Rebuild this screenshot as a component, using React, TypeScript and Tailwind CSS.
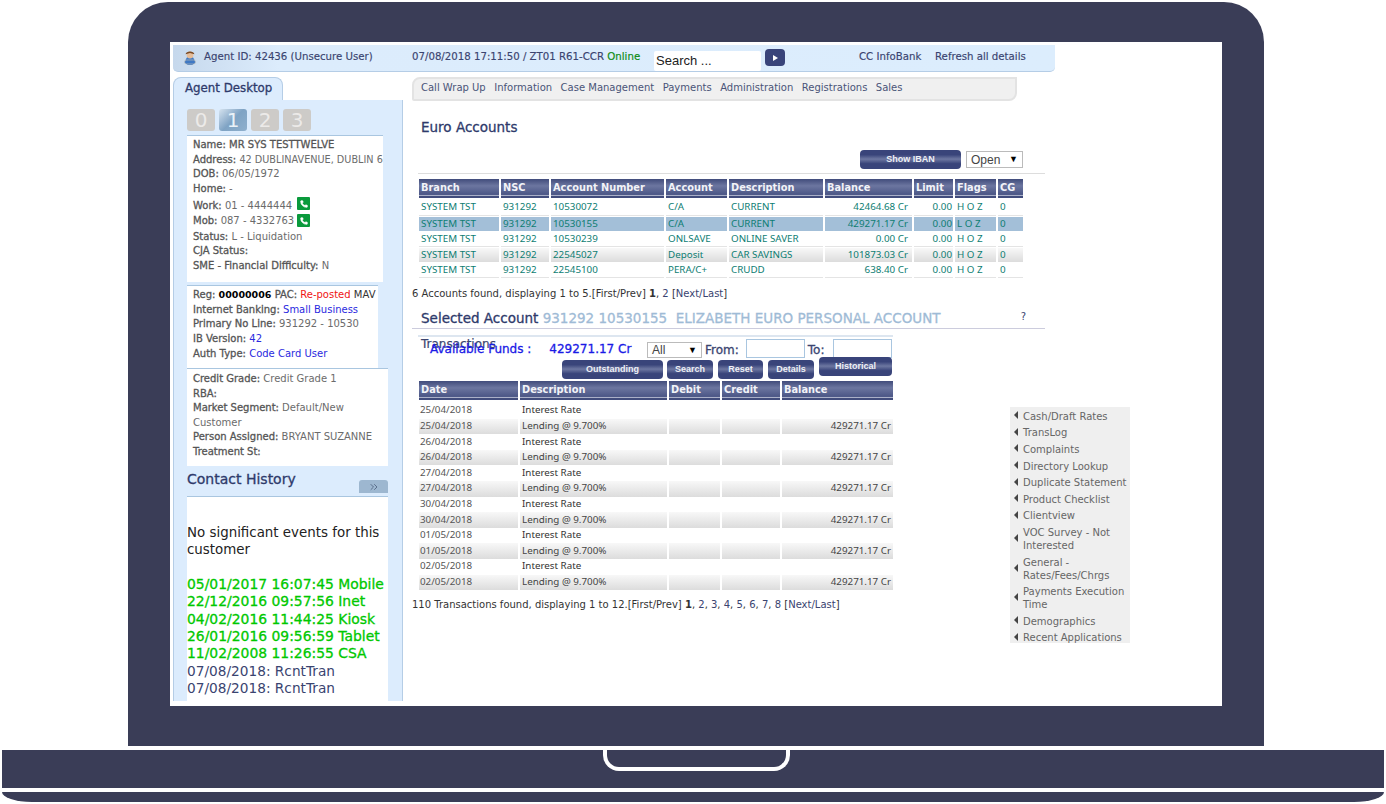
import { ChevronsRight, Phone } from "lucide-react";

const accounts = [
  ["SYSTEM TST", "931292", "10530072", "C/A", "CURRENT", "42464.68 Cr", "0.00", "H O Z", "0"],
  ["SYSTEM TST", "931292", "10530155", "C/A", "CURRENT", "429271.17 Cr", "0.00", "L O Z", "0"],
  ["SYSTEM TST", "931292", "10530239", "ONLSAVE", "ONLINE SAVER", "0.00 Cr", "0.00", "H O Z", "0"],
  ["SYSTEM TST", "931292", "22545027", "Deposit", "CAR SAVINGS", "101873.03 Cr", "0.00", "H O Z", "0"],
  ["SYSTEM TST", "931292", "22545100", "PERA/C+", "CRUDD", "638.40 Cr", "0.00", "H O Z", "0"],
];

const dates = ["25/04/2018", "26/04/2018", "27/04/2018", "30/04/2018", "01/05/2018", "02/05/2018"];

const sideLinks = [
  "Cash/Draft Rates",
  "TransLog",
  "Complaints",
  "Directory Lookup",
  "Duplicate Statement",
  "Product Checklist",
  "Clientview",
  "VOC Survey - Not Interested",
  "General - Rates/Fees/Chrgs",
  "Payments Execution Time",
  "Demographics",
  "Recent Applications",
];

const headCell =
  "h-[19px] flex items-center pl-[2px] pt-[2px] text-[9.8px] font-bold text-[#f2f3f8] border-b-2 border-b-[#414c7c] bg-[linear-gradient(#414c7b,#6c76a0_40%,#4f5a89_85%)] shadow-[inset_0_-1px_0_#aab0c8]";

const fadeCell = "bg-[linear-gradient(#f8f8f8,#dcdcdc)]";

const NavyButton = ({ label, className }: { label: string; className: string }) => (
  <button className={`rounded-[4px] text-[9px] font-bold text-[#eef0f6] font-['Liberation_Sans',sans-serif] bg-[linear-gradient(#39447a,#39447a_25%,#6d77a1_48%,#39447a_72%)] ${className}`}>
    {label}
  </button>
);

const FakeSelect = ({ label, className }: { label: string; className: string }) => (
  <div className={`flex items-center justify-between border border-[#bbb] bg-white px-[4px] font-['Liberation_Sans',sans-serif] text-[12px] font-normal text-[#444] [-webkit-text-stroke:0] ${className}`}>
    <span>{label}</span>
    <span className="text-[9px] text-black">▼</span>
  </div>
);

const PhoneBadge = () => (
  <span className="mt-[1px] inline-flex h-[13px] w-[13px] items-center justify-center self-start rounded-[1px] bg-[#0a9a3c]">
    <Phone size={8} fill="white" stroke="white" />
  </span>
);

const Label = ({ children }: { children: React.ReactNode }) => (
  <span className="text-[#555] [-webkit-text-stroke:0.3px]">{children}</span>
);

export default function App() {
  return (
    <div className="flex h-[804px] w-[1386px] flex-col overflow-hidden bg-white font-['DejaVu_Sans',sans-serif] text-[10px] text-[#6b6b6b]">
      {/* lid */}
      <div className="ml-[128px] mt-[2px] h-[744px] w-[1136px] rounded-t-[40px] bg-[#3a3d57] pl-[42px] pt-[40px]">
        <div className="h-[664px] w-[1052px] overflow-hidden bg-white">
          {/* top bar */}
          <div className="ml-[3px] mt-[3px] flex h-[27px] w-[882px] items-start rounded-b-[5px] border-b border-[#b5cde6] bg-[linear-gradient(90deg,#c6d8ec,#dcecfc_12%,#dcedfd)] text-[10.2px] text-[#3a4470] [-webkit-text-stroke:0.15px]">
            <svg width="16" height="16" viewBox="0 0 16 16" className="ml-[9px] mt-[4px]">
              <circle cx="8" cy="12" r="4.5" fill="#3f78c4" />
              <rect x="2.5" y="11" width="11" height="4" rx="2" fill="#3f78c4" stroke="#c9c2b4" strokeWidth="0.6" />
              <circle cx="8" cy="6" r="3.4" fill="#e6bd9a" />
              <path d="M3.6 5.2C4 1.6 12 1.6 12.4 5.2L8 4z" fill="#7a4a25" />
            </svg>
            <span className="ml-[6px] mt-[4px] w-[208px]">Agent ID: 42436 (Unsecure User)</span>
            <span className="mt-[4px] w-[242px]">
              07/08/2018 17:11:50 / ZT01 R61-CCR <span className="text-[#0b8a12]">Online</span>
            </span>
            <div className="mt-[6px] flex h-[20px] w-[107px] items-center rounded-[2px] bg-white pl-[2px] font-['Liberation_Sans',sans-serif] text-[13px] text-[#222] [-webkit-text-stroke:0]">
              Search ...
            </div>
            <div className="ml-[4px] mt-[4px] flex h-[17px] w-[20px] items-center justify-center rounded-[4px] bg-[#39447a]">
              <span className="h-0 w-0 border-y-[3.5px] border-l-[5px] border-y-transparent border-l-white" />
            </div>
            <span className="ml-[74px] mt-[4px] w-[76px]">CC InfoBank</span>
            <span className="mt-[4px]">Refresh all details</span>
          </div>

          <div className="flex">
            {/* left column */}
            <div className="ml-[3px] w-[230px] shrink-0 pt-[5px]">
              <div className="flex h-[23px] w-[110px] items-center whitespace-nowrap rounded-t-[8px] border border-b-0 border-[#b5cde6] bg-[#dcecfd] pl-[11px] text-[11.8px] text-[#2e3a6b] [-webkit-text-stroke:0.3px]">
                Agent Desktop
              </div>
              <div className="h-[601px] overflow-hidden border-x border-[#b5cde6] bg-[#dcecfd] pl-[13px]">
                <div className="flex gap-[4px] pt-[9px]">
                  {["0", "1", "2", "3"].map((n) => (
                    <div
                      key={n}
                      className={
                        n === "1"
                          ? "flex h-[22px] w-[28px] items-center justify-center rounded-[3px] bg-[linear-gradient(135deg,#d6e3ef,#7fa3c4_50%,#8fb0cd)] text-[20px] text-[#eaf2f8]"
                          : "flex h-[22px] w-[28px] items-center justify-center rounded-[3px] bg-[#cdcbc8] text-[20px] text-[#eceae8]"
                      }
                    >
                      {n}
                    </div>
                  ))}
                </div>
                <div className="mt-[4px] h-[147px] w-[196px] overflow-hidden whitespace-nowrap border-t border-[#a9c6e0] bg-white pl-[6px] pt-[2px] leading-[14.6px]">
                  <div><Label>Name: MR SYS TESTTWELVE</Label></div>
                  <div><Label>Address:</Label> <span className="text-[9.7px]">42 DUBLINAVENUE, DUBLIN 6</span></div>
                  <div><Label>DOB:</Label> 06/05/1972</div>
                  <div><Label>Home:</Label> -</div>
                  <div className="flex h-[17px] items-end">
                    <span className="w-[104px]"><Label>Work:</Label> 01 - 4444444</span>
                    <PhoneBadge />
                  </div>
                  <div className="flex h-[15px] items-end">
                    <span className="w-[104px]"><Label>Mob:</Label> 087 - 4332763</span>
                    <PhoneBadge />
                  </div>
                  <div className="mt-[1.5px]"><Label>Status:</Label> L - Liquidation</div>
                  <div><Label>CJA Status:</Label></div>
                  <div><Label>SME - Financial Difficulty:</Label> N</div>
                </div>
                <div className="mt-[3px] h-[83px] w-[191px] whitespace-nowrap border-t border-[#a9c6e0] bg-white pl-[6px] pt-[2px] leading-[14.7px]">
                  <div><Label>Reg:</Label> <b className="text-[9.5px] text-black">00000006</b> <Label>PAC:</Label> <span className="text-[#f01414]">Re-posted</span> <span className="text-[#333]">MAV</span></div>
                  <div><Label>Internet Banking:</Label> <span className="text-[#2a2ae0]">Small Business</span></div>
                  <div><Label>Primary No Line:</Label> 931292 - 10530</div>
                  <div><Label>IB Version:</Label> <span className="text-[#2a2ae0]">42</span></div>
                  <div><Label>Auth Type:</Label> <span className="text-[#2a2ae0]">Code Card User</span></div>
                </div>
                <div className="h-[98px] w-[201px] border-t border-[#a9c6e0] bg-white pl-[6px] pt-[3px] leading-[14.6px]">
                  <div><Label>Credit Grade:</Label> Credit Grade 1</div>
                  <div><Label>RBA:</Label></div>
                  <div><Label>Market Segment:</Label> Default/New Customer</div>
                  <div><Label>Person Assigned:</Label> BRYANT SUZANNE</div>
                  <div><Label>Treatment St:</Label></div>
                </div>
                <div className="flex h-[31px] w-[201px] items-end justify-between border-b border-[#a9c6e0] pb-[3px]">
                  <span className="mb-[3px] text-[14px] text-[#2e3a6b] [-webkit-text-stroke:0.3px]">Contact History</span>
                  <span className="flex h-[13px] w-[29px] items-center justify-center rounded-t-[3px] bg-[#9db7d0] text-[#5b6f8c]">
                    <ChevronsRight size={12} />
                  </span>
                </div>
                <div className="h-[205px] w-[201px] overflow-hidden bg-white pt-[27px] leading-[17.4px]">
                  <div className="text-[13.4px] text-[#222]">No significant events for this customer</div>
                  <div className="mt-[17px] whitespace-nowrap text-[13.9px] text-[#00c800] [-webkit-text-stroke:0.3px]">
                    <div>05/01/2017 16:07:45 Mobile</div>
                    <div>22/12/2016 09:57:56 Inet</div>
                    <div>04/02/2016 11:44:25 Kiosk</div>
                    <div>26/01/2016 09:56:59 Tablet</div>
                    <div>11/02/2008 11:26:55 CSA</div>
                  </div>
                  <div className="text-[13.7px] text-[#3a4470]">
                    <div>07/08/2018: RcntTran</div>
                    <div>07/08/2018: RcntTran</div>
                    <div>07/08/2018: RcntTran</div>
                  </div>
                </div>
              </div>
            </div>

            {/* centre column */}
            <div className="w-[607px] shrink-0 pt-[5px]">
              <div className="ml-[9px] flex h-[24px] w-[605px] items-center gap-[8.5px] rounded-bl-[2px] rounded-br-[8px] rounded-tl-[8px] border-2 border-[#e3e3e3] bg-[#f0f0f0] pb-[3px] pl-[7px] text-[#4a5478]">
                <span>Call Wrap Up</span>
                <span>Information</span>
                <span>Case Management</span>
                <span>Payments</span>
                <span>Administration</span>
                <span>Registrations</span>
                <span>Sales</span>
              </div>
              <h2 className="ml-[18px] mt-[18px] text-[13.5px] leading-[16px] text-[#2e3a6b] [-webkit-text-stroke:0.3px]">Euro Accounts</h2>
              <div className="ml-[15px] mt-[15px] w-[627px] border-b border-[#ddd] pb-[4px]">
                <div className="ml-[442px] flex h-[19px] items-center gap-[5px]">
                  <NavyButton label="Show IBAN" className="h-[19px] w-[101px]" />
                  <FakeSelect label="Open" className="h-[17px] w-[57px]" />
                </div>
              </div>

              <div className="ml-[16px] mt-[5px] w-[604px]">
                <div className="grid grid-cols-[80px_48px_113px_61px_94px_87px_39px_41px_25px] gap-x-[2px]">
                  {["Branch", "NSC", "Account Number", "Account", "Description", "Balance", "Limit", "Flags", "CG"].map((h) => (
                    <div key={h} className={headCell}>{h}</div>
                  ))}
                </div>
                <div className="mt-[3px] flex flex-col gap-y-[1px] font-['Noto_Sans',sans-serif] text-[9.8px]">
                  {accounts.map((row, i) => (
                    <div key={row[2]} className="grid grid-cols-[80px_48px_113px_61px_94px_87px_39px_41px_25px] gap-x-[2px]">
                      {row.map((cell, j) => (
                        <div
                          key={j}
                          className={
                            (i === 1 ? "bg-[#a3bfd8] " : i === 3 ? fadeCell + " " : "border-b border-[#e4e4e4] bg-white ") +
                            "flex h-[14.6px] items-center pl-[2px] text-[#0d7d72] " +
                            (j === 5 ? "justify-end pr-[4px]" : j === 6 ? "justify-end pr-[1px]" : "")
                          }
                        >
                          {cell}
                        </div>
                      ))}
                    </div>
                  ))}
                </div>
              </div>

              <div className="ml-[9px] mt-[9px] whitespace-nowrap leading-[14px] text-[#333]">
                6 Accounts found, displaying 1 to 5.[First/Prev] <b>1</b>, <span className="text-[#3a4470]">2</span> [<span className="text-[#3a4470]">Next/Last</span>]
              </div>

              <div className="ml-[9px] mt-[8px] flex h-[20px] w-[633px] items-start justify-between whitespace-nowrap border-b border-[#ccd] pl-[9px]">
                <div className="text-[13.5px] leading-[18px] text-[#2e3a6b] [-webkit-text-stroke:0.3px]">
                  Selected Account <span className="text-[#9fbbd6]">931292 10530155 &nbsp;ELIZABETH EURO PERSONAL ACCOUNT</span>
                </div>
                <span className="mr-[19px] text-[#3a4470]">?</span>
              </div>

              <div className="ml-[15px] mt-[6px] h-[1px] w-[475px]">
                <div className="h-[2px] bg-[#dde6f0]" />
              </div>
              <div className="relative ml-[15px] h-[45px] w-[475px]">
                <span className="absolute left-[3px] top-[-1px] text-[12px] text-[#3a4470] [-webkit-text-stroke:0.2px]">Transactions</span>
                <span className="absolute left-[12px] top-[4px] whitespace-nowrap text-[12px] text-[#1a1ae6] [-webkit-text-stroke:0.3px]">
                  Available Funds :<span className="ml-[18px]">429271.17 Cr</span>
                </span>
                <div className="absolute left-[229px] top-[3px] flex items-start text-[12px] leading-[16px] text-[#3a4470] [-webkit-text-stroke:0.3px]">
                  <FakeSelect label="All" className="mt-[3px] h-[16px] w-[55px]" />
                  <span className="ml-[3px] mt-[3px]">From:</span>
                  <span className="ml-[7px] h-[19px] w-[59px] border border-[#a9c6e0] bg-white" />
                  <span className="ml-[3px] mt-[3px]">To:</span>
                  <span className="ml-[9px] h-[19px] w-[59px] border border-[#a9c6e0] bg-white" />
                </div>
                <div className="absolute left-[144px] top-[24px] flex items-start gap-[4px]">
                  <NavyButton label="Outstanding" className="h-[19px] w-[101px]" />
                  <NavyButton label="Search" className="h-[19px] w-[46px]" />
                  <NavyButton label="Reset" className="ml-[1px] h-[19px] w-[45px]" />
                  <NavyButton label="Details" className="ml-[1px] h-[19px] w-[46px]" />
                  <NavyButton label="Historical" className="ml-[1px] -mt-[3px] h-[19px] w-[73px]" />
                </div>
              </div>

              <div className="ml-[16px] w-[474px]">
                <div className="grid grid-cols-[99px_147px_51px_58px_111px] gap-x-[2px]">
                  {["Date", "Description", "Debit", "Credit", "Balance"].map((h) => (
                    <div key={h} className={headCell}>{h}</div>
                  ))}
                </div>
                <div className="mt-[3px] font-['Noto_Sans',sans-serif] text-[9.8px]">
                  {dates.flatMap((d) => [
                    <div key={d + "a"} className="grid h-[15.6px] grid-cols-[99px_147px_51px_58px_111px] items-center gap-x-[2px] pl-[1px]">
                      <div className="text-[#555]">{d}</div>
                      <div className="pl-[1px] text-[#333]">Interest Rate</div>
                    </div>,
                    <div key={d + "b"} className="grid h-[15.6px] grid-cols-[99px_147px_51px_58px_111px] gap-x-[2px] text-[#444]">
                      <div className={`flex items-center pl-[1px] text-[#555] ${fadeCell}`}>{d}</div>
                      <div className={`flex items-center pl-[2px] ${fadeCell}`}>Lending @ 9.700%</div>
                      <div className={fadeCell} />
                      <div className={fadeCell} />
                      <div className={`flex items-center justify-end pr-[2px] ${fadeCell}`}>429271.17 Cr</div>
                    </div>,
                  ])}
                </div>
              </div>

              <div className="ml-[9px] mt-[8px] whitespace-nowrap leading-[14px] text-[#333]">
                110 Transactions found, displaying 1 to 12.[First/Prev] <b>1</b>,{" "}
                <span className="text-[#3a4470]">2</span>, <span className="text-[#3a4470]">3</span>, <span className="text-[#3a4470]">4</span>,{" "}
                <span className="text-[#3a4470]">5</span>, <span className="text-[#3a4470]">6</span>, <span className="text-[#3a4470]">7</span>,{" "}
                <span className="text-[#3a4470]">8</span> [<span className="text-[#3a4470]">Next/Last</span>]
              </div>
            </div>

            {/* side links */}
            <div className="mt-[335px] h-[236px] w-[120px] shrink-0 bg-[#efefef] pl-[4px] pr-[2px] pt-[1px] leading-[13px] text-[#666]">
              {sideLinks.map((l) => (
                <div key={l} className="flex items-center gap-[5px] py-[1.8px]">
                  <span className="h-0 w-0 shrink-0 -translate-y-[1px] border-y-[4px] border-r-[4px] border-y-transparent border-r-[#444]" />
                  <span>{l}</span>
                </div>
              ))}
            </div>
          </div>
        </div>
      </div>

      {/* base */}
      <div className="ml-[2px] mt-[4px] h-[38px] w-[1382px] shrink-0 bg-[#3a3d57]">
        <div className="ml-[601px] h-[21px] w-[187px] rounded-b-[16px] border-x-4 border-b-4 border-white" />
      </div>
      <div className="ml-[2px] mt-[4px] h-[10px] w-[1382px] shrink-0 rounded-bl-[30px_10px] rounded-br-[30px_10px] bg-[#3a3d57]" />
    </div>
  );
}
